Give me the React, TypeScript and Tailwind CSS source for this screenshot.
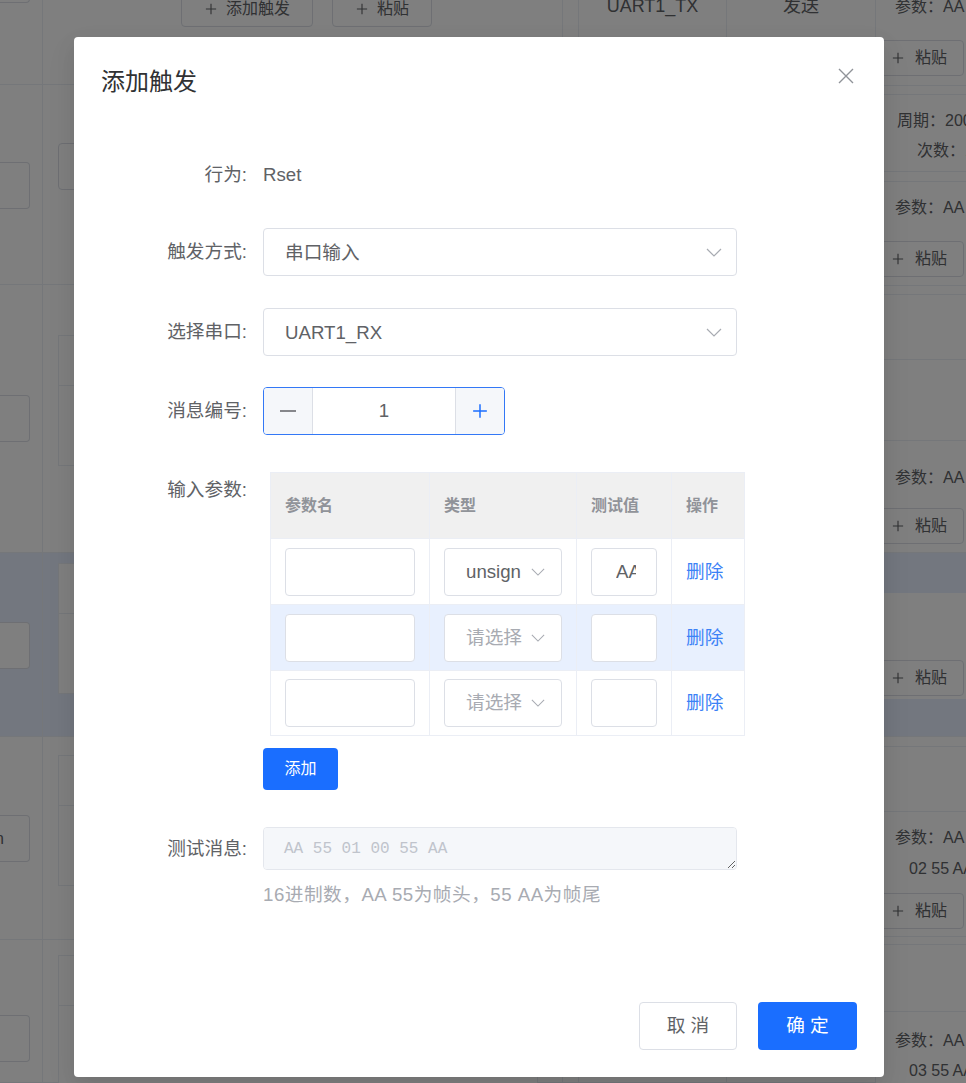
import React from "react";

// background page rows (same heights in every column)
const pageRows = [
  { h: "h-[85px]", bg: "", box: "-mt-[44px]", nest: "" },
  { h: "h-[200px]", bg: "", box: "mt-[77px]", nest: "mt-[58px]" },
  { h: "h-[268px]", bg: "", box: "mt-[110px]", nest: "mt-[50px]" },
  { h: "h-[184px]", bg: "bg-[#e6efff]", box: "mt-[69px]", nest: "mt-[10px]" },
  { h: "h-[203px]", bg: "", box: "mt-[78px]", nest: "mt-[18px]" },
  { h: "h-[143px]", bg: "", box: "mt-[75px]", nest: "mt-[15px]" },
];

function PlusIcon({ className = "" }: { className?: string }) {
  return (
    <svg viewBox="0 0 14 14" className={className} fill="none" stroke="currentColor" strokeWidth="1.3">
      <path d="M7 1v12M1 7h12" />
    </svg>
  );
}

function Chevron({ className = "" }: { className?: string }) {
  return (
    <svg viewBox="0 0 16 9" className={className} fill="none" stroke="currentColor" strokeWidth="1.2">
      <path d="M1 1l7 7 7-7" />
    </svg>
  );
}

function GhostBtn({ label, className = "" }: { label: string; className?: string }) {
  return (
    <div
      className={`flex h-[36px] shrink-0 items-center rounded-[4px] border border-[#dcdfe6] bg-white text-[16px] leading-[20px] text-[#606266] ${className}`}
    >
      <PlusIcon className="h-[12px] w-[12px]" />
      <span>{label}</span>
    </div>
  );
}

function BackgroundPage() {
  return (
    <div className="flex h-full text-[16px] leading-[24px] text-[#606266]">
      {/* first column: cut-off buttons */}
      <div className="flex w-[43px] shrink-0 flex-col border-r border-[#ebeef5]">
        {pageRows.map((r, i) => (
          <div key={i} className={`flex shrink-0 flex-col border-b border-[#ebeef5] ${r.h} ${r.bg}`}>
            <div
              className={`flex h-[47px] w-[30px] items-center rounded-r-[4px] border border-l-0 border-[#dcdfe6] bg-white ${r.box}`}
            >
              {i === 4 && <span className="-ml-[5px]">n</span>}
            </div>
          </div>
        ))}
      </div>

      {/* second column: nested tables */}
      <div className="flex w-[520px] shrink-0 flex-col border-r border-[#ebeef5]">
        {pageRows.map((r, i) => (
          <div key={i} className={`flex shrink-0 flex-col border-b border-[#ebeef5] ${r.h} ${r.bg}`}>
            {i === 0 && (
              <div className="-mt-[9px] flex gap-[19px] pl-[138px]">
                <GhostBtn label="添加触发" className="gap-[9px] pl-[23px] pr-[22px]" />
                <GhostBtn label="粘贴" className="gap-[9px] pl-[23px] pr-[22px]" />
              </div>
            )}
            {i === 1 && (
              <div className={`ml-[15px] h-[47px] w-[200px] rounded-[4px] border border-[#dcdfe6] bg-white ${r.nest}`} />
            )}
            {i > 1 && (
              <div className={`ml-[15px] w-[480px] border border-[#ebeef5] bg-white ${r.nest}`}>
                <div className="h-[50px] border-b border-[#ebeef5]" />
                <div className="h-[79px]" />
              </div>
            )}
          </div>
        ))}
      </div>

      <div className="flex w-[16px] shrink-0 flex-col border-r border-[#ebeef5]">
        {pageRows.map((r, i) => (
          <div key={i} className={`shrink-0 border-b border-[#ebeef5] ${r.h} ${r.bg}`} />
        ))}
      </div>

      <div className="flex w-[148px] shrink-0 flex-col border-r border-[#ebeef5]">
        {pageRows.map((r, i) => (
          <div key={i} className={`shrink-0 border-b border-[#ebeef5] text-center ${r.h} ${r.bg}`}>
            {i === 0 && <div className="-mt-[6px] text-[18px]">UART1_TX</div>}
          </div>
        ))}
      </div>

      <div className="flex w-[149px] shrink-0 flex-col border-r border-[#ebeef5]">
        {pageRows.map((r, i) => (
          <div key={i} className={`shrink-0 border-b border-[#ebeef5] text-center ${r.h} ${r.bg}`}>
            {i === 0 && <div className="-mt-[6px] text-[18px]">发送</div>}
          </div>
        ))}
      </div>

      {/* last column: params + paste buttons */}
      <div className="flex w-[134px] shrink-0 flex-col whitespace-nowrap">
        <div className="h-[86px] shrink-0 border-b border-[#ebeef5]">
          <div className="-mt-[5px] pl-[19px]">参数：AA 55 01 00 55 AA</div>
          <GhostBtn label="粘贴" className="ml-[2px] mt-[21px] w-[86px] gap-[11px] pl-[13px]" />
        </div>
        <div className="h-[9px] shrink-0 border-b border-[#ebeef5]" />
        <div className="h-[77px] shrink-0 border-b border-[#ebeef5] pt-[14px]">
          <div className="pl-[21px]">周期：200ms</div>
          <div className="mt-[6px] pl-[41px]">次数：10</div>
        </div>
        <div className="h-[10px] shrink-0 border-b border-[#ebeef5]" />
        <div className="h-[104px] shrink-0 border-b border-[#ebeef5] pt-[14px]">
          <div className="pl-[19px]">参数：AA 55 01 00 55 AA</div>
          <GhostBtn label="粘贴" className="ml-[2px] mt-[21px] w-[86px] gap-[11px] pl-[13px]" />
        </div>
        <div className="h-[9px] shrink-0 border-b border-[#ebeef5]" />
        <div className="h-[65px] shrink-0 border-b border-[#ebeef5]" />
        <div className="h-[81px] shrink-0 border-b border-[#ebeef5]" />
        <div className="h-[112px] shrink-0 border-b border-[#ebeef5] pt-[25px]">
          <div className="pl-[19px]">参数：AA 55 01 00 55 AA</div>
          <GhostBtn label="粘贴" className="ml-[2px] mt-[18px] w-[86px] gap-[11px] pl-[13px]" />
        </div>
        <div className="h-[40px] shrink-0 bg-[#e6efff]" />
        <div className="h-[106px] shrink-0 pt-[67px]">
          <GhostBtn label="粘贴" className="ml-[2px] h-[35px] w-[86px] gap-[11px] pl-[13px]" />
        </div>
        <div className="h-[38px] shrink-0 border-b border-[#ebeef5] bg-[#e6efff]" />
        <div className="h-[10px] shrink-0 border-b border-[#ebeef5]" />
        <div className="h-[65px] shrink-0 border-b border-[#ebeef5]" />
        <div className="h-[125px] shrink-0 border-b border-[#ebeef5] pt-[14px]">
          <div className="pl-[19px]">参数：AA 55 01 00 55 AA</div>
          <div className="mt-[7px] pl-[33px]">02 55 AA</div>
          <GhostBtn label="粘贴" className="ml-[2px] mt-[12px] w-[86px] gap-[11px] pl-[13px]" />
        </div>
        <div className="h-[8px] shrink-0 border-b border-[#ebeef5]" />
        <div className="h-[67px] shrink-0 border-b border-[#ebeef5]" />
        <div className="shrink-0 pt-[17px]">
          <div className="pl-[19px]">参数：AA 55 01 00 55 AA</div>
          <div className="mt-[6px] pl-[33px]">03 55 AA</div>
        </div>
      </div>
    </div>
  );
}

function FormRow({
  label,
  children,
  className = "",
  leading = "leading-[48px]",
}: {
  label: string;
  children: React.ReactNode;
  className?: string;
  leading?: string;
}) {
  return (
    <div className={`flex ${className}`}>
      <div className={`w-[173px] shrink-0 text-right text-[#606266] ${leading}`}>{label}</div>
      <div className="ml-[16px]">{children}</div>
    </div>
  );
}

function BigSelect({ value }: { value: string }) {
  return (
    <div className="flex h-[48px] w-[474px] items-center justify-between rounded-[4px] border border-[#dcdfe6] bg-white pl-[21px] pr-[14px]">
      <span className="pt-[2px] leading-[24px] text-[#606266]">{value}</span>
      <Chevron className="h-[9px] w-[16px] text-[#a8abb2]" />
    </div>
  );
}

const paramRows = [
  { type: "unsign", test: "AA", bg: "bg-white", h: "h-[66px]" },
  { type: "", test: "", bg: "bg-[#e8f0fe]", h: "h-[66px]" },
  { type: "", test: "", bg: "bg-white", h: "h-[65px]" },
];

function ParamTable() {
  const cell = "flex items-center border-r border-b border-[#ebeef5] px-[14px]";
  return (
    <div className="ml-[7px] mt-[6px] w-[475px] border-l border-t border-[#ebeef5]">
      <div className="grid h-[66px] grid-cols-[159px_147px_95px_73px] bg-[#f0f0f0] text-[16px] font-bold leading-[22px] text-[#909399]">
        <div className={cell}>参数名</div>
        <div className={cell}>类型</div>
        <div className={cell}>测试值</div>
        <div className={cell}>操作</div>
      </div>
      {paramRows.map((r, i) => (
        <div key={i} className={`grid grid-cols-[159px_147px_95px_73px] ${r.h} ${r.bg}`}>
          <div className={cell}>
            <div className="h-[48px] w-full rounded-[4px] border border-[#dcdfe6] bg-white" />
          </div>
          <div className={cell}>
            <div className="flex h-[48px] w-full items-center justify-between rounded-[4px] border border-[#dcdfe6] bg-white pl-[21px] pr-[16px]">
              {r.type ? (
                <span className="leading-[24px] text-[#606266]">{r.type}</span>
              ) : (
                <span className="leading-[24px] text-[#a8abb2]">请选择</span>
              )}
              <Chevron className="h-[8px] w-[14px] text-[#a8abb2]" />
            </div>
          </div>
          <div className={cell}>
            <div className="h-[48px] w-full overflow-hidden whitespace-nowrap rounded-[4px] border border-[#dcdfe6] bg-white pl-[24px] pr-[20px] leading-[46px] text-[#606266]">
              <div className="overflow-hidden">{r.test}</div>
            </div>
          </div>
          <div className={`${cell} leading-[24px] text-[#3b82f6]`}>删除</div>
        </div>
      ))}
    </div>
  );
}

function TriggerDialog() {
  return (
    <div className="absolute left-[74px] top-[37px] flex h-[1040px] w-[810px] flex-col rounded-[4px] bg-white text-[18.67px] shadow-[0_12px_32px_4px_rgba(0,0,0,0.04),0_8px_20px_rgba(0,0,0,0.08)]">
      {/* header */}
      <div className="flex items-start justify-between pl-[27px] pr-[30px] pt-[29px]">
        <h2 className="text-[24px] leading-[32px] text-[#303133]">添加触发</h2>
        <svg viewBox="0 0 16 16" className="mt-[2px] h-[16px] w-[16px] text-[#909399]" fill="none" stroke="currentColor" strokeWidth="1.4">
          <path d="M1 1l14 14M15 1L1 15" />
        </svg>
      </div>

      {/* form */}
      <FormRow label="行为:" className="mt-[53px]">
        <span className="leading-[48px] text-[#606266]">Rset</span>
      </FormRow>
      <FormRow label="触发方式:" className="mt-[29px]">
        <BigSelect value="串口输入" />
      </FormRow>
      <FormRow label="选择串口:" className="mt-[32px]">
        <BigSelect value="UART1_RX" />
      </FormRow>
      <FormRow label="消息编号:" className="mt-[31px]">
        <div className="flex h-[48px] w-[242px] overflow-hidden rounded-[4px] border border-[#3378f6] bg-white">
          <div className="flex w-[49px] items-center justify-center border-r border-[#dcdfe6] bg-[#f5f7fa] text-[#606266]">
            <svg viewBox="0 0 16 2" className="h-[2px] w-[16px]" fill="none" stroke="currentColor" strokeWidth="1.4">
              <path d="M0 1h16" />
            </svg>
          </div>
          <div className="flex-1 text-center leading-[46px] text-[#606266]">1</div>
          <div className="flex w-[49px] items-center justify-center border-l border-[#dcdfe6] bg-[#f5f7fa] text-[#1a6eff]">
            <PlusIcon className="h-[16px] w-[16px]" />
          </div>
        </div>
      </FormRow>
      <FormRow label="输入参数:" className="mt-[31px]">
        <ParamTable />
        <button className="mt-[12px] h-[42px] w-[75px] rounded-[4px] bg-[#1a6eff] text-[16px] text-white">添加</button>
      </FormRow>
      <FormRow label="测试消息:" className="mt-[37px]" leading="leading-[43px]">
        <textarea
          readOnly
          placeholder="AA 55 01 00 55 AA"
          className="block h-[43px] w-[474px] rounded-[4px] border border-[#e4e7ed] bg-[#f5f7fa] px-[20px] py-[9px] font-['Liberation_Mono',monospace] text-[16px] leading-[24px] text-[#a8abb2] outline-none placeholder:text-[#c0c4cc]"
        />
        <div className="mt-[11px] leading-[28px] tracking-[0.5px] text-[#a8abb2]">16进制数，AA 55为帧头，55 AA为帧尾</div>
      </FormRow>

      {/* footer */}
      <div className="mt-auto flex justify-end gap-[21px] pb-[27px] pr-[27px]">
        <button className="h-[48px] w-[98px] rounded-[4px] border border-[#dcdfe6] bg-white text-[#606266]">取 消</button>
        <button className="h-[48px] w-[99px] rounded-[4px] bg-[#1a6eff] text-white">确 定</button>
      </div>
    </div>
  );
}

export default function App() {
  return (
    <div className="relative h-[1083px] w-full overflow-hidden bg-white font-['Liberation_Sans','Noto_Sans_CJK_SC',sans-serif]">
      <BackgroundPage />
      <div className="absolute inset-0 bg-black/50" />
      <TriggerDialog />
    </div>
  );
}
